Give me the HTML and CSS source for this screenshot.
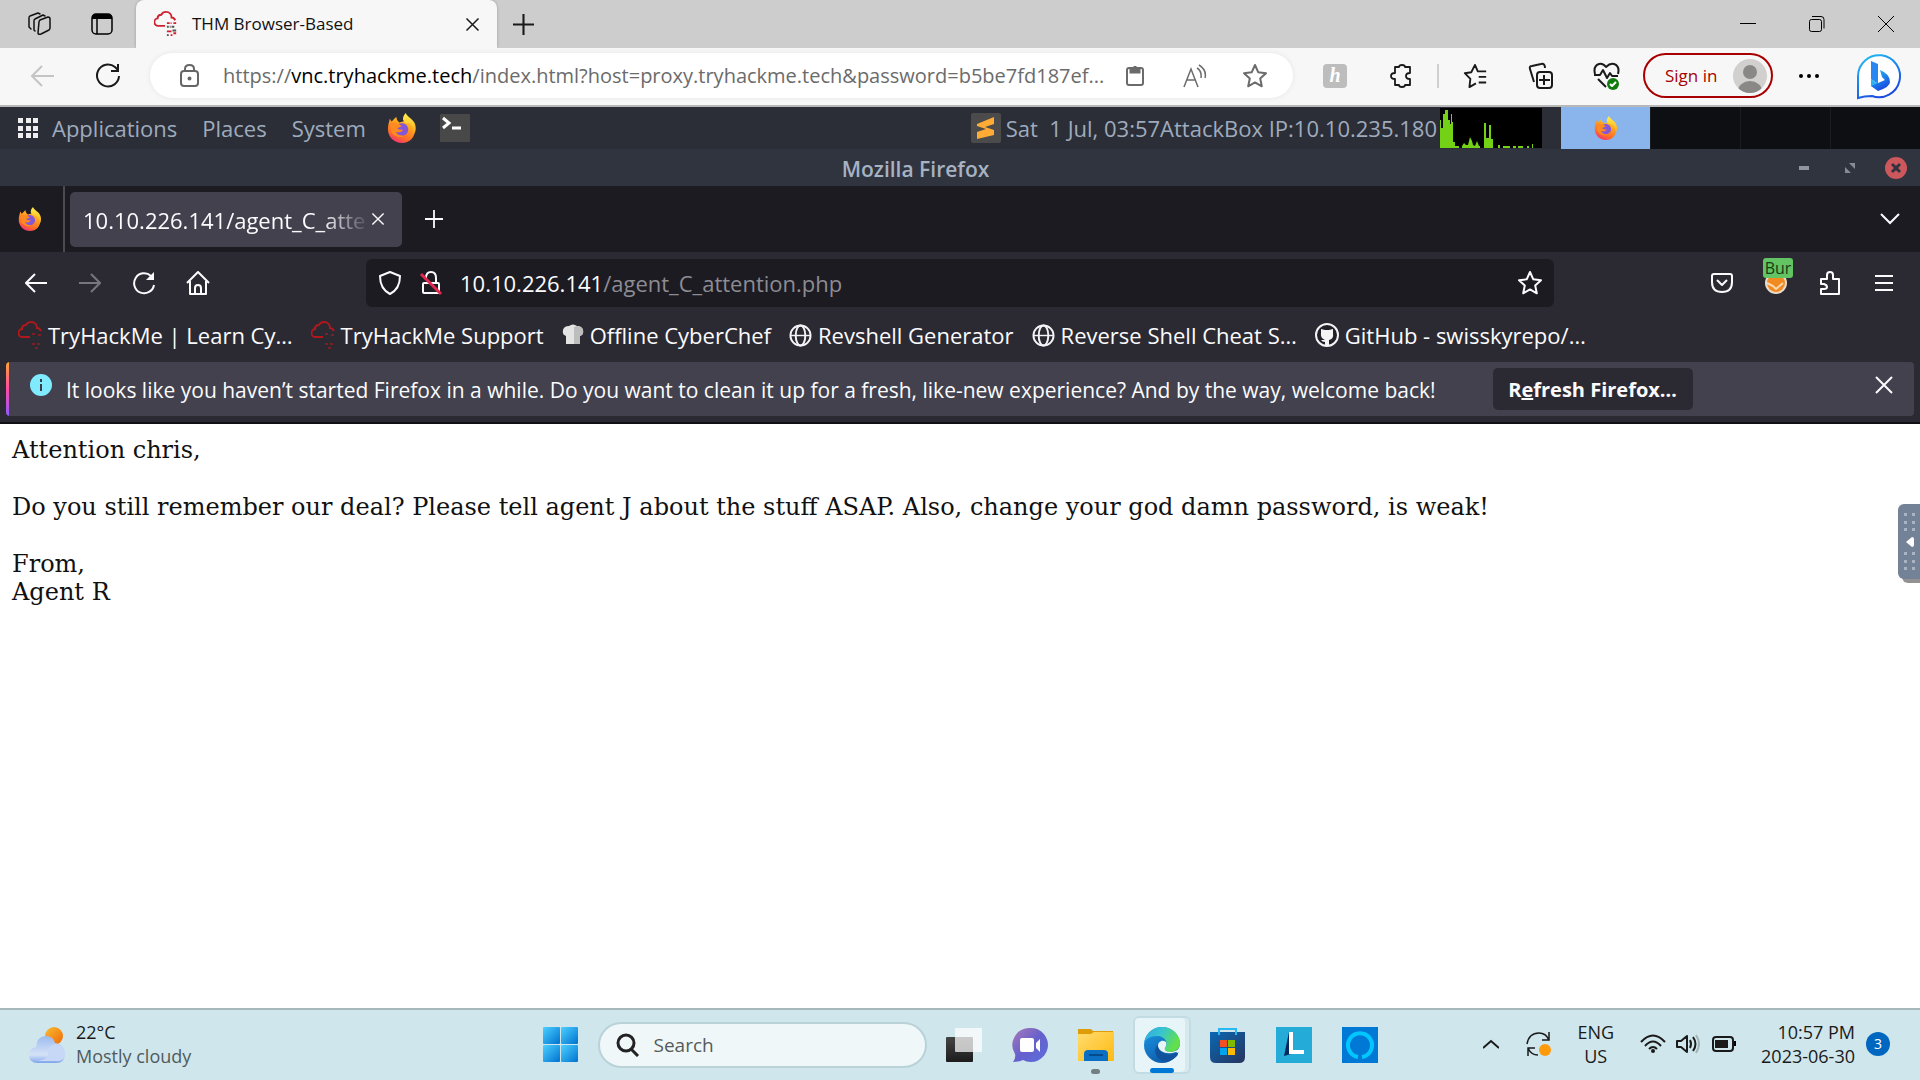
FILE: index.html
```html
<!DOCTYPE html>
<html lang="en">
<head>
<meta charset="utf-8">
<title>THM Browser-Based</title>
<link rel="stylesheet" href="styles.css">
</head>
<body>
<svg class="defs" aria-hidden="true">
  <defs>
    <linearGradient id="fx-flame" x1="0.8" y1="0" x2="0.3" y2="1"><stop offset="0" stop-color="#ffe226"/><stop offset="0.4" stop-color="#ff9a1f"/><stop offset="0.75" stop-color="#ff6a2a"/><stop offset="1" stop-color="#f0307a"/></linearGradient>
    <linearGradient id="fx-tail" x1="0" y1="0" x2="0" y2="1"><stop offset="0" stop-color="#fff04a"/><stop offset="1" stop-color="#ffa81e"/></linearGradient>
    <linearGradient id="win" x1="0" y1="0" x2="1" y2="1"><stop offset="0" stop-color="#4cd0ff"/><stop offset="1" stop-color="#0072d0"/></linearGradient>
    <linearGradient id="sun" x1="0" y1="0" x2="1" y2="1"><stop offset="0" stop-color="#f8bd30"/><stop offset="1" stop-color="#f0680a"/></linearGradient>
    <linearGradient id="cloud-fill" x1="0" y1="0" x2="0" y2="1"><stop offset="0" stop-color="#9dbbee"/><stop offset="0.7" stop-color="#d5e2f8"/><stop offset="1" stop-color="#7ea4ea"/></linearGradient>
    <linearGradient id="chat" x1="0" y1="0" x2="1" y2="1"><stop offset="0" stop-color="#a97ab8"/><stop offset="0.5" stop-color="#6660cc"/><stop offset="1" stop-color="#5b6fdc"/></linearGradient>
    <linearGradient id="folder" x1="0" y1="0" x2="1" y2="1"><stop offset="0" stop-color="#ffdc70"/><stop offset="1" stop-color="#ffba10"/></linearGradient>
    <linearGradient id="edge-top" x1="0" y1="0" x2="1" y2="0.4"><stop offset="0" stop-color="#2fa8e0"/><stop offset="0.5" stop-color="#38c5d0"/><stop offset="1" stop-color="#63e048"/></linearGradient>
    <linearGradient id="edge-low" x1="0" y1="0" x2="0.6" y2="1"><stop offset="0" stop-color="#1c9be8"/><stop offset="1" stop-color="#0c59a8"/></linearGradient>
    <linearGradient id="store" x1="0" y1="0" x2="1" y2="1"><stop offset="0" stop-color="#0a68b4"/><stop offset="1" stop-color="#27345e"/></linearGradient>
    <linearGradient id="bing" x1="0" y1="0" x2="0.5" y2="1"><stop offset="0" stop-color="#20c4f4"/><stop offset="1" stop-color="#1b4be0"/></linearGradient>
    <linearGradient id="dark-sq" x1="0" y1="0" x2="0" y2="1"><stop offset="0" stop-color="#444"/><stop offset="1" stop-color="#1c1c1c"/></linearGradient>
    <symbol id="firefox" viewBox="0 0 32 32">
      <path fill="url(#fx-flame)" d="M3 6c1 1 1 2 2 3 2-2 3-3 5-5 0 3 1 4 3 6l8-2c3-2 9 2 9 9 0 9-6 15-14 15S1 26 1 17c0-4 1-7 2-11z"/>
      <path fill="#8457d8" d="M9 15c2-4 8-6 12-2 3 4 2 9-3 11-4 1-8 0-9-4 2 1 5 1 6-1-3-1-4-2-6-4z"/>
      <path fill="#ff8a1f" d="M4 11c3-1 6 0 9 1l3 2c-2 1-4 1-5 3 2 1 4 0 6 1-2 3-6 3-8 1 1 4 5 6 10 5-6 4-14 0-15-6z"/>
      <path fill="url(#fx-tail)" d="M20 0c1 4 8 6 10 12 1 4 1 7-1 10 0-5-2-10-6-11-3 0-5-1-6-4 0-3 1-5 3-7z"/>
    </symbol>
    <symbol id="thm-cloud" viewBox="0 0 24 28">
      <path d="M12 15H5a4 4 0 0 1-1-8c0-3 2-4 4-4 1-2 3-3 5-3 4 0 6 3 6 6 2 0 3 1 4 3" transform="translate(0 1)" fill="none" stroke="currentColor" stroke-width="2"/>
    </symbol>
    <symbol id="globe" viewBox="0 0 24 24"><g fill="none" stroke="#f4f4f8" stroke-width="2"><circle cx="12" cy="12" r="10.500"/><ellipse cx="12" cy="12" rx="5" ry="10.500"/><path d="M2 12h20" stroke-width="1.500"/></g></symbol>
    <symbol id="cross" viewBox="0 0 20 20"><path d="M2 2l16 16M18 2L2 18" fill="none" stroke="currentColor" stroke-width="2"/></symbol>
    <symbol id="plus" viewBox="0 0 20 20"><path d="M10 0v20M0 10h20" fill="none" stroke="currentColor" stroke-width="2"/></symbol>
    <symbol id="star" viewBox="0 0 26 26"><path d="M13 2l3.300 7.300 7.700.9-5.800 5.300 1.600 7.800-6.800-3.900-6.800 3.900 1.600-7.800L2 10.200l7.700-.9z" fill="none" stroke="currentColor" stroke-width="2" stroke-linejoin="round"/></symbol>
  </defs>
</svg>

<div class="screen">
  <header class="edge-tabs">
    <button class="tool" aria-label="Workspaces"><svg width="24" height="24" viewBox="0 0 24 24"><g fill="none" stroke="#111" stroke-width="1.500" stroke-linejoin="round" stroke-linecap="round"><path d="M12 10q0-1 1-2l8-3q2 0 2 2v9q0 1-1 2l-8 4q-3 1-3-1z"/><path d="M8 19l-1-1V9q0-2 1-2l8-4 2 1M4 17l-2-2V6q0-2 1-2l8-3 2 1"/></g></svg></button>
    <button class="tool" aria-label="Tab actions"><svg width="22" height="22" viewBox="0 0 22 22"><rect x="1" y="1" width="20" height="20" rx="4" fill="none" stroke="#000" stroke-width="1.500"/><path d="M1 6V5q0-4 4-4h12q4 0 4 4v1z"/><path d="M6 6v15" stroke="#000" stroke-width="1.500"/></svg></button>
    <div class="edge-tab">
      <svg class="favicon" width="25" height="26" viewBox="0 0 25 28"><use href="#thm-cloud" width="24" height="28"/><g fill="none" stroke-width="2"><path d="M14 13h3M18 13h1M21 13h3M14 22h5M18 26h2M21 24h3" stroke="currentColor"/><path d="M14 17h2M17 17h1M19 17h3M20 21h4M14 26h2" stroke="#555"/></g></svg>
      <span class="edge-tab-title">THM Browser-Based</span>
      <button class="bare" aria-label="Close tab"><svg width="15" height="15"><use href="#cross"/></svg></button>
    </div>
    <button class="edge-new" aria-label="New tab"><svg width="21" height="21"><use href="#plus"/></svg></button>
    <div class="grow"></div>
    <button class="win-btn" aria-label="Minimize"><svg width="16" height="16"><path d="M0 7.500h16" stroke="#000"/></svg></button>
    <button class="win-btn" aria-label="Restore"><svg width="16" height="16" fill="none" stroke="#000"><rect x=".5" y="3.500" width="12" height="12" rx="2"/><path d="M3 .5h9q3 0 3 3v9"/></svg></button>
    <button class="win-btn" aria-label="Close"><svg width="16" height="16" stroke="#000"><path d="M0 0l16 16M16 0L0 16"/></svg></button>
  </header>

  <nav class="edge-bar" aria-label="Browser toolbar">
    <button class="tool faint" aria-label="Back"><svg width="24" height="24" fill="none" stroke="currentColor" stroke-width="2"><path d="M24 12H2M12 2L2 12l10 10"/></svg></button>
    <button class="tool" aria-label="Refresh"><svg width="26" height="26" fill="none" stroke="currentColor" stroke-width="2"><path d="M24 13a11 11 0 1 1-4-9l3 3M23 1v7h-7"/></svg></button>
    <div class="edge-url">
      <svg width="20" height="26" fill="none" stroke="#666" stroke-width="2"><rect x="1" y="8" width="17" height="15" rx="3"/><path d="M5 8V6q0-4 4.500-4T14 6v2"/><circle cx="9.500" cy="15.500" r="1" fill="#666"/></svg>
      <span class="edge-address">https://<b>vnc.tryhackme.tech</b>/index.html?host=proxy.tryhackme.tech&amp;password=b5be7fd187ef...</span>
      <button class="url-tool" aria-label="Paste"><svg width="20" height="22" fill="none" stroke="currentColor" stroke-width="2"><rect x="2" y="3" width="16" height="17" rx="2"/><path d="M6 4h8v3H6zM10 1v3" stroke-width="3"/></svg></button>
      <button class="url-tool" aria-label="Read aloud"><svg width="24" height="24" fill="none" stroke="currentColor" stroke-width="1.500"><path d="M1 23L8 5l7 18M4 16h8M14 4q5 3 4 10M16 1q8 5 6 13" /></svg></button>
      <button class="url-tool" aria-label="Favorite"><svg width="26" height="26"><use href="#star"/></svg></button>
    </div>
    <button class="tool" aria-label="Honey"><span class="honey">h</span></button>
    <button class="tool" aria-label="Extensions"><svg width="22" height="24" viewBox="0 0 22 24" fill="none" stroke="currentColor" stroke-width="1.800" stroke-linejoin="round"><path d="M5 3h4q0-2 3-2t3 2h5v6q-4 0-4 3t4 3v6h-5q0 2-3 2t-3-2H5v-6q-4 0-4-3t4-3z"/></svg></button>
    <i class="divider"></i>
    <button class="tool" aria-label="Favorites"><svg width="26" height="26" viewBox="0 0 26 28" fill="none" stroke="currentColor" stroke-width="2" stroke-linejoin="round"><path d="M17 9h-1l-3-7-4 8-7 1 6 6-1 9 7-4M17 9h8M17 15h8M17 21h8"/></svg></button>
    <button class="tool" aria-label="Collections"><svg width="26" height="28" fill="none" stroke="currentColor" stroke-width="2" stroke-linejoin="round"><rect x="9" y="10" width="15" height="16" rx="3"/><path d="M16 13v10M11 18h11M6 20L2 7q-1-3 2-3l9-2q4-1 4 4"/></svg></button>
    <button class="tool" aria-label="Browser essentials"><svg width="28" height="30" fill="none" stroke="currentColor" stroke-width="2" stroke-linejoin="round"><path d="M2 13Q0 5 6 3q4-1 7 3 4-4 8-3 6 2 4 10M1 14h6l3-5 4 8 3-5 2 3h6M5 18l8 8"/><circle cx="20" cy="23" r="6" fill="#107c10" stroke="none"/><path d="M17 23l2 2 4-4" stroke="#fff"/></svg></button>
    <button class="signin"><span>Sign in</span><svg width="34" height="34" viewBox="0 0 34 34"><clipPath id="av"><circle cx="17" cy="17" r="17"/></clipPath><g clip-path="url(#av)"><rect width="34" height="34" fill="#d2d0ce"/><circle cx="17" cy="13" r="7" fill="#8a8886"/><ellipse cx="17" cy="32" rx="12" ry="10" fill="#8a8886"/></g></svg></button>
    <button class="tool" aria-label="Settings and more"><svg width="22" height="6"><circle cx="3" cy="3" r="2"/><circle cx="11" cy="3" r="2"/><circle cx="19" cy="3" r="2"/></svg></button>
    <button class="tool bing" aria-label="Bing"><svg width="46" height="48" viewBox="0 0 46 48"><path d="M2 46V24a21 21 0 1 1 14 20c-4 0-8 0-14 2z" fill="#fff" stroke="url(#bing)" stroke-width="2"/><path d="M15 9l7 3v20l-7-5z" fill="#2a86f0"/><path d="M15 27l7 5v6l-7-4z" fill="#2db4f0"/><path d="M24 18q10 4 10 12 0 5-12 9l-7-5 14-6-3-3z" fill="url(#bing)"/></svg></button>
  </nav>

  <main class="desktop">
    <div class="panel">
      <svg width="20" height="20" fill="#eee"><path d="M0 0h5v5H0zM8 0h5v5H8zM15 0h5v5h-5zM0 8h5v5H0zM8 8h5v5H8zM15 8h5v5h-5zM0 15h5v5H0zM8 15h5v5H8zM15 15h5v5h-5z"/></svg>
      <button class="menu">Applications</button>
      <button class="menu">Places</button>
      <button class="menu">System</button>
      <button class="launch" aria-label="Firefox"><svg width="30" height="32"><use href="#firefox"/></svg></button>
      <button class="launch" aria-label="Terminal"><svg width="30" height="28"><rect width="30" height="28" rx="1" fill="#484848"/><path d="M3 4l6 5-6 5M12 14h9" fill="none" stroke="#fff" stroke-width="3"/></svg></button>
      <div class="grow"></div>
      <svg width="30" height="30"><rect width="30" height="30" rx="2" fill="#4b4b4b"/><path d="M6 11l17-7v7l-9 3 9 3v5L6 26v-7l9-3-9-3z" fill="#ffab35"/></svg>
      <span class="status"><span>Sat&nbsp; 1 Jul, 03:57</span><span>AttackBox IP:10.10.235.180</span></span>
      <svg class="graph" width="102" height="40"><rect width="102" height="40"/><path fill="#73d216" d="M0 40V12h1v8h2V6h2V2h3v10h2v4h1V6h1v8h1v20h2v4h4v2h3v-2l2-3 2 2h2l2-8 2 4 1 4 2 1 2-5 2 5h1v2h4V15h2v15h3V17h2v14h2v9h5v-3h2v3h3v-2h7v2h3v-2h3v2h2v-2h5v2h4v-2h2v2h3v-4h1v4z"/></svg>
      <div class="spaces"><div class="space on"><svg width="24" height="24"><use href="#firefox"/></svg></div><div class="space"></div><div class="space"></div><div class="space"></div></div>
    </div>

    <div class="titlebar">
      <h1>Mozilla Firefox</h1>
      <button class="tb" aria-label="Minimize"><svg width="10" height="4"><rect width="10" height="4" fill="#9096a0"/></svg></button>
      <button class="tb" aria-label="Restore"><svg width="10" height="10" fill="#868c97"><path d="M4 0h6v6zM0 4v6h6z"/></svg></button>
      <button class="tb" aria-label="Close"><svg width="22" height="22"><circle cx="11" cy="11" r="11" fill="#cc575d"/><path d="M7 7l8 8M15 7l-8 8" stroke="#2f343f" stroke-width="3"/></svg></button>
    </div>

    <div class="fx-tabs">
      <div class="fx-view"><svg width="24" height="24"><use href="#firefox"/></svg></div>
      <div class="fx-tab"><span>10.10.226.141/agent_C_atte</span><button class="bare" aria-label="Close tab"><svg width="14" height="14"><use href="#cross"/></svg></button></div>
      <button class="bare fx-new" aria-label="New tab"><svg width="18" height="18"><use href="#plus"/></svg></button>
      <div class="grow"></div>
      <button class="fx-tool" aria-label="List all tabs"><svg width="20" height="12" fill="none" stroke="currentColor" stroke-width="2"><path d="M1 1l9 9 9-9"/></svg></button>
    </div>

    <div class="fx-nav">
      <div class="fx-side">
        <button class="fx-tool" aria-label="Back"><svg width="22" height="20" fill="none" stroke="currentColor" stroke-width="2"><path d="M22 10H2M10 1l-9 9 9 9"/></svg></button>
        <button class="fx-tool dim" aria-label="Forward"><svg width="22" height="20" fill="none" stroke="currentColor" stroke-width="2"><path d="M0 10h20M12 1l9 9-9 9"/></svg></button>
        <button class="fx-tool" aria-label="Reload"><svg width="24" height="24" fill="none" stroke="currentColor" stroke-width="2"><path d="M22 14A10 10 0 1 1 19 5"/><path d="M22 1v8h-8z" fill="currentColor" stroke="none"/></svg></button>
        <button class="fx-tool" aria-label="Home"><svg width="24" height="24" fill="none" stroke="currentColor" stroke-width="2" stroke-linejoin="round"><path d="M1 12L12 1l11 11M4 10v13h16V10M9 23v-6q0-3 3-3t3 3v6"/></svg></button>
      </div>
      <div class="fx-url">
        <svg width="24" height="26" fill="none" stroke="#fbfbfe" stroke-width="2"><path d="M12 2l10 4q0 13-10 18Q2 19 2 6z" stroke-linejoin="round"/></svg>
        <svg width="24" height="26" fill="none" stroke="#fbfbfe" stroke-width="2"><rect x="4" y="13" width="16" height="10" rx="1"/><path d="M7 8q0-6 5-6t5 6v5"/><path d="M2 4l20 20" stroke="#e22850" stroke-width="3"/></svg>
        <span class="fx-address"><b>10.10.226.141</b>/agent_C_attention.php</span>
        <button class="bare" aria-label="Bookmark this page"><svg width="26" height="26"><use href="#star"/></svg></button>
      </div>
      <div class="fx-side end">
        <button class="fx-tool" aria-label="Pocket"><svg width="24" height="22" fill="none" stroke="currentColor" stroke-width="2" stroke-linejoin="round"><path d="M4 2h16q2 0 2 2v6q0 10-10 10T2 10V4q0-2 2-2zM7 8l5 5 5-5"/></svg></button>
        <button class="fx-tool burp" aria-label="FoxyProxy"><svg width="24" height="24"><circle cx="12" cy="12" r="11" fill="#e8dccb"/><circle cx="12" cy="12" r="9" fill="#f28a22"/><path d="M3 12l6 3 3 3 7-6" stroke="#f8d8b0" stroke-width="2" fill="none"/></svg><span>Bur</span></button>
        <button class="fx-tool" aria-label="Extensions"><svg width="22" height="26" fill="none" stroke="currentColor" stroke-width="2" stroke-linejoin="round"><path d="M2 9h6V5q0-3 3-3t3 3v4h6v15H2v-5h3q3 0 3-2t-3-3H2z"/></svg></button>
        <button class="fx-tool" aria-label="Menu"><svg width="18" height="18" stroke="currentColor" stroke-width="2"><path d="M0 2h18M0 9h18M0 16h18"/></svg></button>
      </div>
    </div>

    <nav class="bookmarks" aria-label="Bookmarks">
      <a href="#"><svg class="red" width="24" height="28"><use href="#thm-cloud"/><path d="M14 13h3M20 14h3M14 23h3M19 23h3M17 27h3" stroke="#7c2026" stroke-width="2"/></svg>TryHackMe | Learn Cy…</a>
      <a href="#"><svg class="red" width="24" height="28"><use href="#thm-cloud"/><path d="M14 13h3M20 14h3M14 23h3M19 23h3M17 27h3" stroke="#7c2026" stroke-width="2"/></svg>TryHackMe Support</a>
      <a href="#"><svg width="22" height="22"><path d="M4 12Q0 11 1 6q1-4 6-4 4-3 8 0 5 0 6 4 1 5-3 6v8H4z" fill="#e4e4e4"/><path d="M12 3v17h6v-8q4-1 3-6-1-4-6-4z" fill="#bdbdbd"/></svg>Offline CyberChef</a>
      <a href="#"><svg width="23" height="23"><use href="#globe"/></svg>Revshell Generator</a>
      <a href="#"><svg width="23" height="23"><use href="#globe"/></svg>Reverse Shell Cheat S…</a>
      <a href="#"><svg width="24" height="24"><circle cx="12" cy="12" r="11" fill="#222129" stroke="#f4f4f4" stroke-width="2"/><path d="M6 6l4 1h4l4-1v4q1 6-4 7v6h-4v-4q-3 0-4-2l4 0q-5-2-4-7z" fill="#f4f4f4"/></svg>GitHub - swisskyrepo/…</a>
    </nav>

    <div class="notice-wrap">
      <div class="notice">
        <svg class="up" width="24" height="24"><circle cx="12" cy="12" r="11" fill="#80ebff"/><path d="M12 6v3M12 11v7" stroke="#3a3944" stroke-width="2"/></svg>
        <span class="notice-text">It looks like you haven’t started Firefox in a while. Do you want to clean it up for a fresh, like-new experience? And by the way, welcome back!</span>
        <button class="refresh">R<u>e</u>fresh Firefox…</button>
        <div class="grow"></div>
        <button class="fx-tool up" aria-label="Dismiss"><svg width="20" height="20"><use href="#cross"/></svg></button>
      </div>
    </div>

    <article class="page">
      <p>Attention chris,</p>
      <p>Do you still remember our deal? Please tell agent J about the stuff ASAP. Also, change your god damn password, is weak!</p>
      <p>From,<br>Agent R</p>
      <button class="handle" aria-label="Show control bar"><svg width="22" height="76"><g fill="#a9b3c1"><path d="M6 9h3v3H6zM14 9h3v3h-3zM6 17h3v3H6zM14 17h3v3h-3zM6 24h3v3H6zM14 24h3v3h-3zM6 48h3v3H6zM14 48h3v3h-3zM6 56h3v3H6zM14 56h3v3h-3zM6 63h3v3H6zM14 63h3v3h-3z"/></g><path d="M8 38l6-5q2 0 2 2v6q0 2-2 2z" fill="#fff"/></svg></button>
    </article>
  </main>

  <footer class="taskbar">
    <div class="side">
      <svg width="36" height="38"><circle cx="25" cy="10" r="9" fill="url(#sun)"/><path d="M9 37q-9 0-9-8 0-7 7-8 1-11 10-11 7 0 9 7 10 1 10 11 0 9-9 9z" fill="url(#cloud-fill)"/><path d="M18 25q5-8 10-7 8 1 8 11-1 5-6 6H5q18-1 13-10z" fill="#c6d8f6"/></svg>
      <div class="weather"><span>22°C</span><span>Mostly cloudy</span></div>
    </div>
    <div class="apps">
      <button class="app" aria-label="Start"><svg width="36" height="36" fill="url(#win)"><rect width="17" height="17" rx="1"/><rect x="18" width="17" height="17" rx="1"/><rect y="18" width="17" height="17" rx="1"/><rect x="18" y="18" width="17" height="17" rx="1"/></svg></button>
      <label class="search"><svg width="24" height="24" fill="none" stroke="#222" stroke-width="3"><circle cx="10" cy="10" r="8"/><path d="M15 16l7 7"/></svg><input type="search" aria-label="Search" placeholder="Search"></label>
      <button class="app" aria-label="Task view"><svg width="36" height="36"><rect y="10" width="27" height="25" rx="1" fill="url(#dark-sq)"/><rect x="9" y="1" width="27" height="24" rx="1" fill="#fff" fill-opacity=".72"/></svg></button>
      <button class="app" aria-label="Chat"><svg width="36" height="36"><path d="M18 1a17 17 0 1 1-7 32q-4 2-10 2 3-4 2-8A17 17 0 0 1 18 1z" fill="url(#chat)"/><rect x="8" y="11" width="14" height="14" rx="2" fill="#fff"/><path d="M24 16l4-4v13l-4-4z" fill="#fff"/></svg></button>
      <button class="app run" aria-label="File Explorer"><svg width="36" height="36"><path d="M0 2h12q2 0 3 2h20v8H0z" fill="#dd9c08"/><path d="M0 7h13l3-2h20v28q0 1-1 1H0z" fill="url(#folder)"/><path d="M6 34v-7q0-4 4-4h16q4 0 4 4v7z" fill="#0b70c4"/><path d="M11 28h14" stroke="#064a8a" stroke-width="2"/></svg></button>
      <button class="app active" aria-label="Edge"><svg width="36" height="36" viewBox="0 0 36 36"><circle cx="18" cy="18" r="18" fill="url(#edge-low)"/><path d="M0 16C2 6 9 0 18 0c11 0 18 8 18 16 0 6-5 9-10 9-4 0-6-2-5-4 4-5 0-12-8-12C6 9 2 12 0 16z" fill="url(#edge-top)"/><path d="M14 17q-6 8 1 15 9 6 18-3 2-3 0-3-8 4-14 0-5-3-5-9z" fill="#10539c"/><path d="M22 15c-4-3-8 0-8 4 1 6 9 9 18 6l2 1q3-3 2-8c-1 5-5 7-10 7-4 0-6-2-5-4q2-3 1-6z" fill="#e7f4f8"/></svg></button>
      <button class="app" aria-label="Microsoft Store"><svg width="36" height="36"><path d="M9 10V2h17v8" fill="none" stroke="#28b8f4" stroke-width="2"/><path d="M0 5h35v25q0 6-6 6H6q-6 0-6-6z" fill="url(#store)"/><path d="M9 5v3M26 5v3" stroke="#28b8f4" stroke-width="2"/><path d="M10 13h7v7h-7z" fill="#f25022"/><path d="M18 13h7v7h-7z" fill="#7fba00"/><path d="M10 21h7v7h-7z" fill="#00a4ef"/><path d="M18 21h7v7h-7z" fill="#ffb900"/></svg></button>
      <button class="app" aria-label="L"><svg width="36" height="36"><rect width="36" height="36" fill="#24abd8"/><path d="M13 5v18l2 4-7 2z" fill="#05295c"/><path d="M13 5h4v18h11v4H13z" fill="#fff"/></svg></button>
      <button class="app" aria-label="Alexa"><svg width="36" height="36"><rect width="36" height="36" fill="#0078d6"/><path d="M16 30a12 12 0 1 1 4 0" fill="none" stroke="#00c8ff" stroke-width="4"/></svg></button>
    </div>
    <div class="side tray">
      <svg width="16" height="10" fill="none" stroke="#1a1a1a" stroke-width="2"><path d="M0 9l8-7 8 7"/></svg>
      <svg class="sync" width="26" height="26" fill="none" stroke="#1a1a1a" stroke-width="1.500"><path d="M1 13Q3 2 13 2q7 0 10 7M23 1v8h-7M12 24q-7 0-10-7M2 25v-8h7"/><circle cx="19" cy="19" r="6" fill="#ff9a0c" stroke="none"/></svg>
      <span class="lang">ENG<br>US</span>
      <svg width="26" height="20" fill="none" stroke="#1a1a1a" stroke-width="2"><path d="M1 8q12-13 24 0M5 12q8-9 16 0M9 15q4-4 8 0"/><circle cx="13" cy="17" r="2" fill="#1a1a1a" stroke="none"/></svg>
      <svg class="vol" width="24" height="20" fill="none" stroke="#1a1a1a" stroke-width="2" stroke-linejoin="round"><path d="M1 7h4l6-5v16l-6-5H1zM14 6q2 4 0 8M17 3q5 7 0 14"/><path d="M20 1q6 9 0 18" stroke="#a3b3b6"/></svg>
      <svg class="bat" width="24" height="18"><rect x="1" y="2" width="20" height="14" rx="3" fill="none" stroke="#1a1a1a" stroke-width="2"/><rect x="3" y="5" width="13" height="8" fill="#1a1a1a"/><path d="M22 6h2v5h-2z"/></svg>
      <span class="clock">10:57 PM<br>2023-06-30</span>
      <span class="badge">3</span>
    </div>
  </footer>
</div>
</body>
</html>
```
FILE: styles.css
```css
* { box-sizing: border-box; }
body { margin: 0; font-family: "Open Sans", "Noto Sans", sans-serif; font-size: 17px; color: #1a1a1a; }
svg { display: block; flex: none; }
button { margin: 0; padding: 0; border: 0; background: none; font: inherit; color: inherit; display: flex; align-items: center; justify-content: center; flex: none; }
b { font-weight: inherit; }
.defs { position: absolute; width: 0; height: 0; }
.grow { flex: 1; }
.screen { min-height: 100vh; display: flex; flex-direction: column; }

/* Edge window */
.edge-tabs { display: flex; height: 48px; align-items: center; padding-left: 7px; background: #cdcdcd; }
.tool { width: 66px; height: 48px; }
.edge-tabs .tool { width: 63px; }
.edge-tab { display: flex; align-items: center; width: 361px; height: 48px; margin-left: 3px; padding: 0 17px; background: #f7f7f7; border-radius: 8px 8px 0 0; box-shadow: 0 0 3px #999; }
.favicon { color: #cf2030; }
.edge-tab-title { flex: 1; padding: 0 0 2px 14px; color: #111; }
.edge-new { width: 52px; height: 48px; }
.win-btn { width: 69px; height: 48px; }
.edge-bar { display: flex; align-items: center; height: 59px; padding: 0 8px 2px 9px; background: #f7f7f7; border-bottom: 2px solid #b8b8b8; position: relative; }
.bing { width: 70px; padding-left: 4px; }
.faint { color: #c4c4c4; }
.edge-url { flex: 1; min-width: 0; display: flex; align-items: center; height: 45px; margin: 0 9px; padding: 0 8px 0 30px; border-radius: 23px; background: #fff; box-shadow: 0 0 5px #e4e4e4; color: #6b6b6b; }
.edge-address { flex: 1; min-width: 0; padding-left: 23px; font-size: 20px; white-space: nowrap; }
.edge-address b { color: #000; }
.url-tool { width: 60px; height: 40px; }
.honey { width: 24px; height: 24px; border-radius: 4px; background: #bdbdbd; color: #fff; font: italic bold 20px/22px "Liberation Serif", serif; }
.divider { width: 2px; height: 24px; margin: 0 3px; background: #d0d0d0; }
.signin { width: 130px; height: 45px; margin: 0 3px; padding: 0 4px 0 20px; justify-content: space-between; border: 2px solid #a80000; border-radius: 23px; color: #a80000; }

/* Remote desktop */
.desktop { flex: 1; display: flex; flex-direction: column; background: #fff; font-size: 22px; }
.panel { display: flex; align-items: center; height: 42px; padding-left: 18px; background: #2b2e37; color: #9fabbd; }
.menu { margin-left: 14px; margin-right: 11px; }
.launch { width: 30px; margin-left: 10px; margin-right: 13px; }
.status { display: flex; margin: 0 3px 0 5px; white-space: nowrap; }
.spaces { display: flex; align-self: stretch; margin-left: 19px; gap: 1px; background: #1b1c20; }
.space { width: 89px; display: flex; align-items: center; justify-content: center; background: #0e0f12; }
.space.on { background: #8ab4ec; }
.titlebar { display: flex; align-items: center; height: 37px; padding: 0 1px 0 50px; background: #2f343f; color: #a7b2c3; }
h1 { flex: 1; margin: 0; padding-top: 2px; font-size: 21px; line-height: 28px; font-weight: 600; text-align: center; }
.tb { width: 46px; height: 34px; }
.fx-tabs { display: flex; align-items: center; height: 66px; padding-right: 3px; background: #1c1b22; color: #fbfbfe; }
.fx-view { display: flex; align-items: center; justify-content: center; width: 65px; height: 66px; padding-right: 4px; border-right: 2px solid #4a4a52; }
.fx-tab { display: flex; align-items: center; width: 332px; height: 55px; margin-left: 5px; padding: 0 17px 0 13px; border-radius: 5px; background: #42414d; }
.fx-tab span { flex: 1; min-width: 0; padding-top: 2px; white-space: nowrap; -webkit-mask-image: linear-gradient(to left, transparent, #000 50px); mask-image: linear-gradient(to left, transparent, #000 50px); }
.fx-new { width: 64px; }
.fx-tool { width: 54px; height: 44px; }
.fx-nav { display: flex; align-items: center; justify-content: space-between; height: 56px; padding: 6px 9px 0; background: #2b2a33; color: #fbfbfe; }
.fx-side { display: flex; flex: 1; }
.end { justify-content: flex-end; }
.dim { color: #77767d; }
.fx-url { flex: 0 1 1188px; min-width: 0; display: flex; align-items: center; height: 48px; gap: 17px; padding: 0 11px 0 12px; border-radius: 6px; background: #1c1b22; color: #fbfbfe; }
.fx-address { flex: 1; min-width: 0; color: #8d8c93; white-space: nowrap; }
.fx-address b { color: #fbfbfe; }
.burp { position: relative; }
.burp span { position: absolute; left: 14px; top: -3px; width: 30px; height: 20px; border-radius: 3px; background: #62c462; color: #173a17; font-size: 16px; line-height: 20px; }
.bookmarks { display: flex; align-items: center; height: 54px; gap: 18px; padding-left: 18px; background: #2b2a33; white-space: nowrap; }
.bookmarks a { display: flex; align-items: center; gap: 6px; color: #fbfbfe; text-decoration: none; }
.red { color: #b0181c; }
.notice-wrap { padding: 0 6px 6px; background: #2b2a33; border-bottom: 2px solid #101014; }
.notice { display: flex; align-items: center; height: 54px; padding: 0 3px 0 23px; border-radius: 4px; background: linear-gradient(#ffa436, #ff4aa2 50%, #9059ff) 0 0 / 3px 100% no-repeat #42414d; color: #fbfbfe; }
.up { margin-bottom: 8px; }
.notice-text { padding: 2px 57px 0 13px; font-size: 21px; white-space: nowrap; }
.refresh { width: 200px; height: 42px; border-radius: 5px; background: #2b2a33; font-size: 20px; font-weight: 700; }
.page { position: relative; flex: 1; padding: 12px; font: 24px/28px "DejaVu Serif", serif; color: #111; }
.page p { margin: 0 0 29px; }
.handle { position: absolute; right: 0; top: 80px; width: 22px; height: 75px; border-radius: 6px 0 0 6px; background: #748297; box-shadow: 4px 4px 0 #929292; }

/* Windows taskbar */
.taskbar { display: grid; grid-template-columns: 1fr auto 1fr; align-items: center; height: 72px; border-top: 2px solid #a5b8bb; background: #cfe7ec; }
.side { display: flex; align-items: center; padding-left: 29px; }
.weather { display: flex; flex-direction: column; padding: 0 0 2px 11px; line-height: 24px; }
.weather span + span { color: #505a5c; }
.apps { display: flex; align-items: center; gap: 8px; }
.app { position: relative; width: 58px; height: 58px; }
.search { display: flex; align-items: center; width: 329px; height: 46px; padding-left: 16px; gap: 14px; border: 2px solid #b9d2d8; border-radius: 23px; background: #f0f7f9; }
.search input { flex: 1; min-width: 0; padding: 0; border: 0; outline: 0; background: none; font: 19px "Open Sans", sans-serif; }
.search input::placeholder { color: #555b5c; opacity: 1; }
.active { background: #e7f4f8; border: 2px solid #c3dce3; border-radius: 6px; box-shadow: inset -4px 0 0 #d5e9ee; }
.active::after, .run::after { content: ""; position: absolute; bottom: -1px; width: 24px; height: 5px; border-radius: 3px; background: #0078d6; }
.run::after { bottom: 0; width: 9px; background: #737f83; }
.weather, .tray { font-size: 18px; }
.tray { justify-content: flex-end; padding: 0 30px 2px 0; line-height: 24px; }
.sync { margin: 0 25px 0 27px; }
.lang { margin-right: 26px; text-align: center; }
.vol { margin: 0 12px 0 10px; }
.clock { margin: 0 11px 0 25px; text-align: right; }
.badge { width: 24px; height: 24px; border-radius: 12px; background: #0067c0; color: #fff; text-align: center; font-size: 14px; line-height: 24px; }
```
